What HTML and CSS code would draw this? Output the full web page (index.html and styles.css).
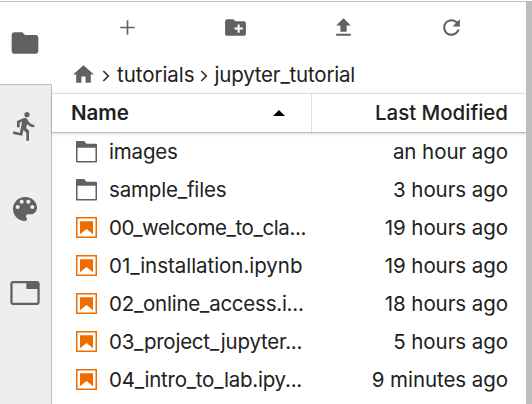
FILE: index.html
```
<!DOCTYPE html>
<html lang="en">
<head>
<meta charset="utf-8">
<title>Files</title>
<link rel="stylesheet" href="styles.css">
</head>
<body>
<svg class="defs" width="0" height="0">
  <symbol id="folder" viewBox="0 0 22 22"><path fill-rule="evenodd" d="M.9 0H8l2.6 2.7h9.500c.6 0 .9.4.9 1v16.900c0 .7-.3 1-.9 1H.9c-.6 0-.9-.3-.9-1V.9C0 .3.3 0 .9 0zM1.500 6.800v13.200h18V6.800z"/></symbol>
  <symbol id="notebook" viewBox="0 0 22 22"><path fill-rule="evenodd" d="M0 0h21v21H0zM1.500 1.500v18h18v-18z"/><path d="M4 4.300h13v12.900l-6.500-5.100L4 17.200z"/></symbol>
  <symbol id="chevron" viewBox="0 0 8 12"><path d="M1.300 1l5 5-5 5" fill="none" stroke="#333" stroke-width="1.700"/></symbol>
</svg>
<div class="app">
  <nav class="sidebar">
    <div class="tab active"><svg viewBox="0 0 24 24"><path d="M10 4H4c-1.100 0-2 .9-2 2v12c0 1.100.9 2 2 2h16c1.100 0 2-.9 2-2V8c0-1.100-.9-2-2-2h-8z"/></svg></div>
    <div class="tab"><svg viewBox="0 0 24 24"><path d="M13.490 5.480c1.100 0 2-.9 2-2s-.9-2-2-2-2 .9-2 2 .9 2 2 2zm-3.600 13.900l1-4.400 2.100 2v6h2v-7.500l-2.100-2 .6-3c1.300 1.500 3.300 2.500 5.500 2.500v-2c-1.900 0-3.500-1-4.300-2.400l-1-1.600c-.4-.6-1-1-1.700-1-.3 0-.5.1-.8.1l-5.200 2.200v4.700h2v-3.400l1.800-.7-1.600 8.100-4.900-1-.4 2z"/></svg></div>
    <div class="tab"><svg viewBox="0 0 24 24"><path d="M12 3c-4.970 0-9 4.030-9 9s4.030 9 9 9c.83 0 1.500-.67 1.500-1.500 0-.39-.15-.74-.39-1.010-.23-.26-.38-.61-.38-.99 0-.83.67-1.500 1.500-1.500H16c2.760 0 5-2.240 5-5 0-4.420-4.030-8-9-8zm-5.500 9c-.83 0-1.500-.67-1.500-1.500S5.670 9 6.500 9 8 9.670 8 10.500 7.330 12 6.500 12zm3-4C8.670 8 8 7.330 8 6.500S8.670 5 9.500 5s1.500.67 1.500 1.500S10.330 8 9.500 8zm5 0c-.83 0-1.500-.67-1.500-1.500S13.670 5 14.500 5s1.500.67 1.500 1.500S15.330 8 14.500 8zm3 4c-.83 0-1.500-.67-1.500-1.500S16.670 9 17.500 9s1.500.67 1.500 1.500-.67 1.500-1.500 1.500z"/></svg></div>
    <div class="tab last"><svg viewBox="0 0 24 24"><path d="M21 3H3c-1.100 0-2 .9-2 2v14c0 1.100.9 2 2 2h18c1.100 0 2-.9 2-2V5c0-1.100-.9-2-2-2zm.3 16.300H2.700V4.700H13V9h8.300z"/></svg></div>
    <div class="rest"></div>
  </nav>
  <main class="browser">
    <div class="toolbar">
      <svg viewBox="0 0 24 24"><path d="M19 12.800h-6.200V19h-1.600v-6.200H5v-1.600h6.200V5h1.600v6.200H19z"/></svg>
      <svg viewBox="0 0 24 24"><path d="M20 6h-8l-2-2H4c-1.110 0-1.990.89-1.990 2L2 18c0 1.110.89 2 2 2h16c1.110 0 2-.89 2-2V8c0-1.110-.89-2-2-2zm-1 8h-3v3h-2v-3h-3v-2h3V9h2v3h3v2z"/></svg>
      <svg viewBox="0 0 24 24"><path d="M9 16h6v-6h4l-7-7-7 7h4zm-4 2h14v2H5z"/></svg>
      <svg viewBox="0 0 24 24"><path d="M17.650 6.350C16.200 4.900 14.210 4 12 4c-4.420 0-7.990 3.580-7.990 8s3.570 8 7.990 8c3.730 0 6.840-2.550 7.730-6h-2.080c-.82 2.330-3.040 4-5.650 4-3.310 0-6-2.690-6-6s2.690-6 6-6c1.660 0 3.140.69 4.220 1.780L13 11h7V4l-2.350 2.350z"/></svg>
    </div>
    <div class="crumbs">
      <svg class="home" viewBox="0 0 24 24"><path d="M10 20v-6h4v6h5v-8h3L12 3 2 12h3v8z"/></svg>
      <svg class="chev"><use href="#chevron"/></svg>
      <span class="c1">tutorials</span>
      <svg class="chev second"><use href="#chevron"/></svg>
      <span class="c2">jupyter_tutorial</span>
    </div>
    <div class="head">
      <div class="hname"><span>Name</span><i class="caret"></i></div>
      <div class="hmod">Last Modified</div>
    </div>
    <ul class="list">
      <li><svg class="dir"><use href="#folder"/></svg><span class="n">images</span><span class="m">an hour ago</span></li>
      <li><svg class="dir"><use href="#folder"/></svg><span class="n">sample_files</span><span class="m">3 hours ago</span></li>
      <li><svg class="nb"><use href="#notebook"/></svg><span class="n tighter">00_welcome_to_cla...</span><span class="m">19 hours ago</span></li>
      <li><svg class="nb"><use href="#notebook"/></svg><span class="n full">01_installation.ipynb</span><span class="m">19 hours ago</span></li>
      <li><svg class="nb"><use href="#notebook"/></svg><span class="n tight">02_online_access.i...</span><span class="m">18 hours ago</span></li>
      <li><svg class="nb"><use href="#notebook"/></svg><span class="n tight">03_project_jupyter...</span><span class="m">5 hours ago</span></li>
      <li><svg class="nb"><use href="#notebook"/></svg><span class="n tight">04_intro_to_lab.ipy...</span><span class="m">9 minutes ago</span></li>
    </ul>
  </main>
  <div class="gutter"></div>
</div>
</body>
</html>
```
FILE: styles.css
```
* { box-sizing: border-box; }
body {
  margin: 0;
  padding-top: 1px;
  height: 404px;
  overflow: hidden;
  background: #fff;
  color: #212121;
  font: 20.5px/38px Inter, "Liberation Sans", sans-serif;
}
.defs { position: absolute; }
svg { display: block; flex: none; fill: #616161; }
.app { display: flex; height: 403px; border-top: 1px solid #bdbdbd; }
.sidebar { width: 52px; flex: none; display: flex; flex-direction: column; }
.tab {
  height: 83px;
  flex: none;
  display: flex;
  align-items: center;
  justify-content: center;
  padding-right: 1px;
  background: #eee;
  border-right: 1px solid #bdbdbd;
  border-bottom: 1px solid #eaeaea;
}
.tab.active { background: #fff; border-right-color: #fff; border-bottom-color: #bdbdbd; padding-bottom: 1px; }
.tab.last { border-bottom: 0; }
.tab svg { width: 32px; height: 32px; }
.rest { flex: 1; background: #eee; border-right: 1px solid #bdbdbd; }
.browser { flex: 1; min-width: 0; }
.toolbar { height: 53px; display: flex; align-items: center; justify-content: space-around; padding: 0 21px 2px 21px; }
.toolbar svg { width: 25px; height: 25px; }
.crumbs { height: 38px; display: flex; align-items: center; padding: 0 0 0 19px; white-space: nowrap; }
.crumbs span { padding-top: 2px; }
.c1 { letter-spacing: -.05px; }
.c2 { letter-spacing: -.19px; }
.home { width: 25px; height: 25px; }
.chev { width: 8px; height: 12px; margin: 3px 7px 0 6px; }
.chev.second { margin-right: 6px; }
.head {
  height: 40px;
  display: flex;
  border-top: 1px solid #e0e0e0;
  border-bottom: 1px solid #bdbdbd;
  box-shadow: 0 1px 3px rgba(0, 0, 0, .16);
  font-weight: 500;
}
.hname { width: 260px; display: flex; align-items: center; justify-content: space-between; padding: 0 26px 0 19px; border-right: 1px solid #e0e0e0; font-weight: 600; }
.caret { border: 6px solid transparent; border-top: 0; border-bottom: 6px solid #000; }
.hmod { flex: 1; text-align: right; padding-right: 18px; letter-spacing: -.03px; }
.list { list-style: none; margin: 0; padding: 0; }
.list li { height: 38px; display: flex; align-items: center; padding: 0 18px 0 24px; white-space: nowrap; }
.list svg { width: 22px; height: 22px; margin-right: 11px; }
.list .nb { fill: #ef6c00; }
.n { letter-spacing: -.17px; }
.n.full { letter-spacing: -.04px; }
.n.tight { letter-spacing: -.24px; }
.n.tighter { letter-spacing: -.4px; }
.m { margin-left: auto; letter-spacing: -.06px; }
.gutter { width: 6px; flex: none; background: #bdbdbd; }
```
